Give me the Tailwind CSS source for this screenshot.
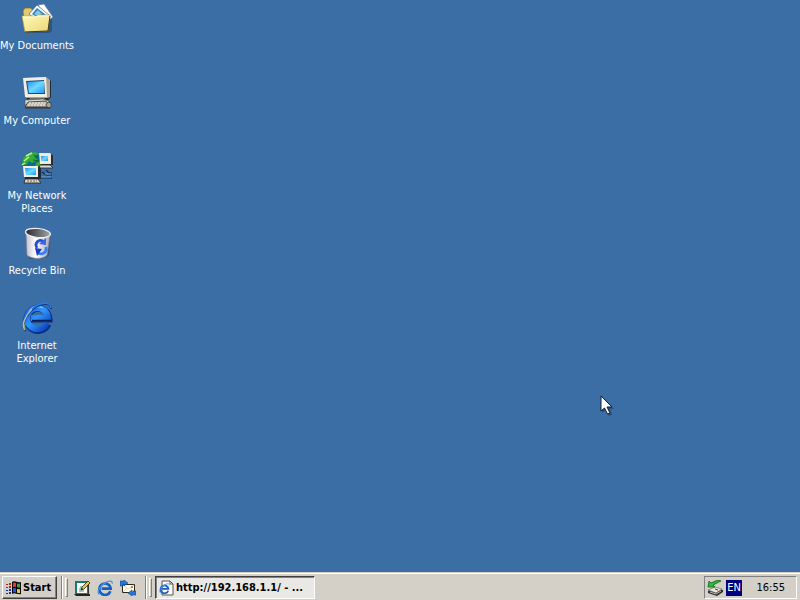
<!DOCTYPE html>
<html lang="en">
<head>
<meta charset="utf-8">
<title>Desktop</title>
<script src="https://cdn.jsdelivr.net/npm/@tailwindcss/browser@4"></script>
</head>
<body class="relative flex h-screen flex-col overflow-hidden bg-[#3b6ea5] font-['DejaVu_Sans_Condensed','DejaVu_Sans',sans-serif] text-[11px] leading-[13px] text-black">
<svg width="0" height="0" class="absolute" aria-hidden="true">
  <defs>
    <linearGradient id="folder" x1="0" y1="0" x2="1" y2="1"><stop offset="0" stop-color="#fffbb8"/><stop offset="1" stop-color="#ecd574"/></linearGradient>
    <linearGradient id="screen" x1="0" y1="0" x2="1" y2="1"><stop offset="0" stop-color="#1f8fee"/><stop offset=".5" stop-color="#6fd8ff"/><stop offset="1" stop-color="#1d9cf4"/></linearGradient>
    <linearGradient id="bin" x1="0" y1="0" x2="1" y2="0"><stop offset="0" stop-color="#c3c0cc"/><stop offset=".4" stop-color="#ffffff"/><stop offset="1" stop-color="#a9a7b6"/></linearGradient>
    <linearGradient id="hole" x1="0" y1="0" x2="1" y2="0"><stop offset="0" stop-color="#26272b"/><stop offset="1" stop-color="#a2a5a8"/></linearGradient>
    <linearGradient id="ie" x1="0" y1="0" x2="1" y2="1"><stop offset="0" stop-color="#1c5fe0"/><stop offset=".45" stop-color="#2f95ff"/><stop offset="1" stop-color="#0a3cb4"/></linearGradient>
    <symbol id="e" viewBox="0 0 16 16">
      <path d="M13.4 11.2A5.7 5.7 0 1 1 13.7 8.6H4.6" fill="none" stroke="#165fc4" stroke-width="2.6"/><path d="M3.8 6.7A5 5 0 0 1 8.5 3.4" fill="none" stroke="#62b4f5" stroke-width="1"/><path d="M2.4 14.5C-.5 13 2 7 7 3.4 11 .6 15.700 0 15.200 3.600" fill="none" stroke="#3d91e8" stroke-width="1.200"/>
    </symbol>
  </defs>
</svg>

<main class="min-h-0 flex-1 pt-[2px]">
  <nav aria-label="Desktop icons" class="grid w-[72px] auto-rows-[75px] text-center text-white">
    <a href="#documents" class="flex flex-col items-center gap-[5px] whitespace-nowrap">
      <svg class="size-8 shrink-0" viewBox="0 0 32 32" aria-hidden="true">
        <path d="M4 13h27v16l-3 2H6z" fill="#24476e" opacity=".65"/>
        <path d="M2 9l2-3h6l2 3h14v19H4z" fill="#e3cb6b" stroke="#806a25" stroke-width=".7"/>
        <path d="M17 3l6-1 9 13-5 4z" fill="#fff" stroke="#64798c" stroke-width=".7"/>
        <path d="M8 12l8-9 12 10-10 7z" fill="#f4f8fb" stroke="#53687a" stroke-width=".7"/>
        <path d="M11 12l5-6 9 7-6 4z" fill="#3282c2"/><path d="M13 12l4-4 4 4-4 2z" fill="#80cce0"/>
        <path d="M1 14h14l2-1h12l-2 16-23 1z" fill="url(#folder)" stroke="#b99f48" stroke-width=".7"/>
        <path d="M2 15h13l2-1h11" fill="none" stroke="#fffee0"/><path d="M4 30l23-1 2-15" fill="none" stroke="#453b18"/>
      </svg>
      <span>My Documents</span>
    </a>
    <a href="#computer" class="flex flex-col items-center gap-[5px]">
      <svg class="size-8 shrink-0" viewBox="0 0 32 32" aria-hidden="true">
        <path d="M4 1h22l4 3v16l-3 3H6z" fill="#292a2e"/>
        <path d="M3 1l22-1 4 3v17l-2 1H5z" fill="#a7a49b"/>
        <path d="M2 1l23-1 1 20H4z" fill="#f0ede2"/>
        <path d="M5 4l18-1 1 14H7z" fill="#164c81"/><path d="M6 5l17-1v12H8z" fill="url(#screen)"/>
        <path d="M9 21h14l3 3H7z" fill="#706e68"/>
        <path d="M4 23l18-1 6 2v4H4z" fill="#dedbd0" stroke="#55534d" stroke-width=".7"/>
        <path d="M4 30l3-5 18-1 4 6z" fill="#b7b4aa" stroke="#302e2b" stroke-width=".8"/>
        <path d="M8 26h16M7 28h19" stroke="#f7f5ec" stroke-dasharray="2 1"/>
        <path d="M27 25l3 1v4l-3 1-2-3z" fill="#aaa69d" stroke="#353331" stroke-width=".7"/><path d="M4 31h25" stroke="#3d2a26"/>
      </svg>
      <span>My Computer</span>
    </a>
    <a href="#network" class="flex flex-col items-center gap-[5px]">
      <svg class="size-8 shrink-0" viewBox="0 0 32 32" aria-hidden="true">
        <circle cx="11" cy="11" r="10.500" fill="#0a6f86"/><path d="M2 6C6 0 14-1 18 2l-5 3 4 3-6 3-3-2-3 4-4-1zM15 11l5-2 2 6-5 5-3-4z" fill="#35ad35"/><path d="M5 4l6-3M3 9l5-4M1 13l3-2" stroke="#c4f09a" stroke-width="1.500"/><path d="M13 3l4 2M12 8l6 1" stroke="#125e40"/>
        <path d="M19 2h11l3 2v9H20z" fill="#282c35"/><path d="M18 1h11l1 1v10H19z" fill="#eeeade"/><path d="M20 4h7v5h-7z" fill="url(#screen)"/><path d="M19 13h10l3 3H18z" fill="#d9d5c9" stroke="#292823" stroke-width=".8"/>
        <path d="M3 14h14l3 2v11H4z" fill="#202c3a"/><path d="M2 14h15v11H3z" fill="#f1eee4"/><path d="M4 16h11v7H5z" fill="url(#screen)"/>
        <path d="M4 27h13l3 4H3z" fill="#dfdbce" stroke="#2d2820" stroke-width=".9"/><path d="M6 29h10" stroke="#656158" stroke-dasharray="2 1"/>
        <path d="M20 26h11M21 20l4 3h6M25 18l3 3h3" fill="none" stroke="#142747" stroke-width="1.200"/><path d="M20 25h10M24 22h6" stroke="#91b9e6" stroke-width=".7"/>
      </svg>
      <span>My Network Places</span>
    </a>
    <a href="#recycle" class="flex flex-col items-center gap-[5px]">
      <svg class="size-8 shrink-0" viewBox="0 0 32 32" aria-hidden="true">
        <path d="M6 4l24 3-2 22-8 3H8z" fill="#354e76" opacity=".7"/>
        <path d="M5 5l1 23c4 4 16 5 20 0l3-20z" fill="url(#bin)" stroke="#8e8998" stroke-width=".7"/>
        <ellipse cx="17" cy="6" rx="12.500" ry="4.500" fill="url(#hole)" stroke="#efeff4" stroke-width="1.200" transform="rotate(6 17 6)"/>
        <path d="M16 21C13 16 18 11 23 15" fill="none" stroke="#244cdb" stroke-width="2.800"/><path d="M25 11v7l-7-1z" fill="#3563eb"/>
        <path d="M25 20c1 6-4 8-8 6" fill="none" stroke="#3781f3" stroke-width="2.800"/><path d="M14 21l7 1-5 7z" fill="#183dc1"/>
      </svg>
      <span>Recycle Bin</span>
    </a>
    <a href="#internet" class="flex flex-col items-center gap-[5px]">
      <svg class="size-8 shrink-0" viewBox="0 0 32 32" aria-hidden="true">
        <path d="M27 22a11 11 0 1 1 1-5H10" fill="none" stroke="#0a2f8c" stroke-width="7"/>
        <path d="M26 21a10.500 10.500 0 1 1 1-5H10" fill="none" stroke="url(#ie)" stroke-width="6"/>
        <path d="M8 10C11 5 17 3 22 6" fill="none" stroke="#64baff" stroke-width="2"/><path d="M11 18.500h20" stroke="#081d58" stroke-width="1.500"/>
        <path d="M5 29C0 26 3 16 10 9 18 1 31-1 30 7" fill="none" stroke="#183c76" stroke-width="2"/>
        <path d="M4 28C0 23 4 14 11 7" fill="none" stroke="#a9bfc6" stroke-width="1.500"/><path d="M11 7C19 0 30-1 30 6" fill="none" stroke="#287ee8" stroke-width="1.500"/><path d="M3 28l1-6" stroke="#a1b46a"/>
      </svg>
      <span>Internet Explorer</span>
    </a>
  </nav>
</main>

<svg class="absolute left-[75%] top-[395px] h-[22px] w-[14px]" viewBox="0 0 14 22" aria-hidden="true">
  <path d="M2 2v16l4-3 3 6 3-1-2-6h4z" fill="#183c69" opacity=".6"/>
  <path d="M1 1v15l3.500-3 3 6 2.500-1-3-6h5z" fill="#fff" stroke="#111c2b"/>
</svg>

<footer class="flex h-7 shrink-0 items-stretch border-t border-[#d4d0c8] bg-[#d4d0c8] pb-px pl-[2px] pr-[3px] pt-[3px] shadow-[inset_0_1px_0_#fff]">
  <button type="button" class="flex w-[55px] items-center gap-px border border-b-[#404040] border-l-white border-r-[#404040] border-t-white pl-[3px] font-bold shadow-[inset_-1px_-1px_0_#808080]">
    <svg class="size-4 shrink-0" viewBox="0 0 16 16" aria-hidden="true">
      <path d="M6 2c3-2 5 1 9 0v12c-4 1-6-2-9 0z" fill="#080808"/>
      <path d="M7 3c1-1 2-.5 3 0v4c-1-.5-2-.5-3 0z" fill="#e53935"/><path d="M11 3.500l3 .2v4l-3-.5z" fill="#35a445"/><path d="M7 8.500c1-.7 2-.5 3 0v4c-1-.5-2-.5-3 0z" fill="#2354d2"/><path d="M11 9l3 .3v4l-3-.5z" fill="#f0cf29"/>
      <path d="M0 4h2v1H0zM3 3h2v2H3zM0 7h2v1H0zM3 6h2v2H3z" fill="#b62124"/><path d="M0 10h2v1H0zM3 9h2v2H3zM0 13h2v1H0zM3 12h2v2H3z" fill="#1d32a5"/>
    </svg>
    Start
  </button>
  <div aria-hidden="true" class="ml-1 w-[2px] border-l border-r border-l-[#808080] border-r-white"></div>
  <div aria-hidden="true" class="my-[2px] ml-[2px] w-[3px] border border-b-[#808080] border-l-white border-r-[#808080] border-t-white"></div>
  <nav aria-label="Quick launch" class="ml-[6px] flex items-center gap-[7px]">
    <button type="button" aria-label="Show desktop" class="size-4">
      <svg viewBox="0 0 16 16" aria-hidden="true"><path d="M1 1h13v13H1z" fill="#167c76"/><path d="M3 3h10v10H3z" fill="#fffdf1"/><path d="M0 14h16v2H2z" fill="#222"/><path d="M14 2h1v13h-1z" fill="#303530"/><path d="M6 7h3M5 9h3M5 11h5" stroke="#4a9089"/><path d="M7 10l1-3 6-6 2 2-6 6z" fill="#e6c943" stroke="#29281c" stroke-width=".8"/><path d="M7 10l1-2 1 1z" fill="#111"/></svg>
    </button>
    <button type="button" aria-label="Internet Explorer" class="size-4"><svg viewBox="0 0 16 16" aria-hidden="true"><use href="#e"/></svg></button>
    <button type="button" aria-label="Outlook Express" class="size-4">
      <svg viewBox="0 0 16 16" aria-hidden="true"><path d="M2.500 4.500h12v8h-12z" fill="#fffbed" stroke="#292823"/><path d="M3 5l5 4 6-4M3 12l4-4M14 12l-4-4" fill="none" stroke="#d8c99b" stroke-width=".7"/><path d="M0 6V1h4V0l4 3-4 3V4H3v2zM16 11v4h-4v1l-4-3 4-3v2h1v-1z" fill="#2479db" stroke="#0b347a" stroke-width=".5"/><path d="M11 6h2v2h-2z" fill="#d37b35"/></svg>
    </button>
  </nav>
  <div aria-hidden="true" class="ml-[9px] w-[2px] border-l border-r border-l-[#808080] border-r-white"></div>
  <div aria-hidden="true" class="my-[2px] ml-[2px] w-[3px] border border-b-[#808080] border-l-white border-r-[#808080] border-t-white"></div>
  <button type="button" aria-pressed="true" class="ml-[3px] flex w-40 items-center gap-px whitespace-nowrap border border-b-white border-l-[#404040] border-r-white border-t-[#404040] bg-[#eae8e4] pl-[3px] font-bold shadow-[inset_1px_1px_0_#808080]">
    <svg class="size-4 shrink-0" viewBox="0 0 16 16" aria-hidden="true"><path d="M3 1h8l3 3v11H3z" fill="#fff" stroke="#55534e"/><path d="M11 1v3h3" fill="none" stroke="#55534e"/><use href="#e" x="0" y="3" width="11" height="11"/></svg>
    http://192.168.1.1/ - ...
  </button>
  <section aria-label="System tray" class="ml-auto flex w-[93px] items-center border border-b-white border-l-[#808080] border-r-white border-t-[#808080] pl-[2px] pr-[11px]">
    <button type="button" aria-label="Safely remove hardware" class="size-4 shrink-0">
      <svg viewBox="0 0 16 16" aria-hidden="true"><path d="M1 11l6-3 9 2v2l-6 4-9-3z" fill="#302f2d"/><path d="M1 10l7-3 7 2-6 4z" fill="#e9e6de" stroke="#5a5852" stroke-width=".6"/><path d="M3 12l6 2 5-3" fill="none" stroke="#bbb7ae"/><path d="M8 9l3 1" stroke="#45423d"/><path d="M1 7l1-6 2 2 7-3 3 1-8 4 2 2z" fill="#30b83b" stroke="#0b621b" stroke-width=".8"/></svg>
    </button>
    <button type="button" aria-label="Input language EN" class="ml-[3px] size-4 shrink-0 bg-[#000080] text-center text-white">EN</button>
    <time datetime="16:55" class="ml-auto">16:55</time>
  </section>
</footer>
</body>
</html>
